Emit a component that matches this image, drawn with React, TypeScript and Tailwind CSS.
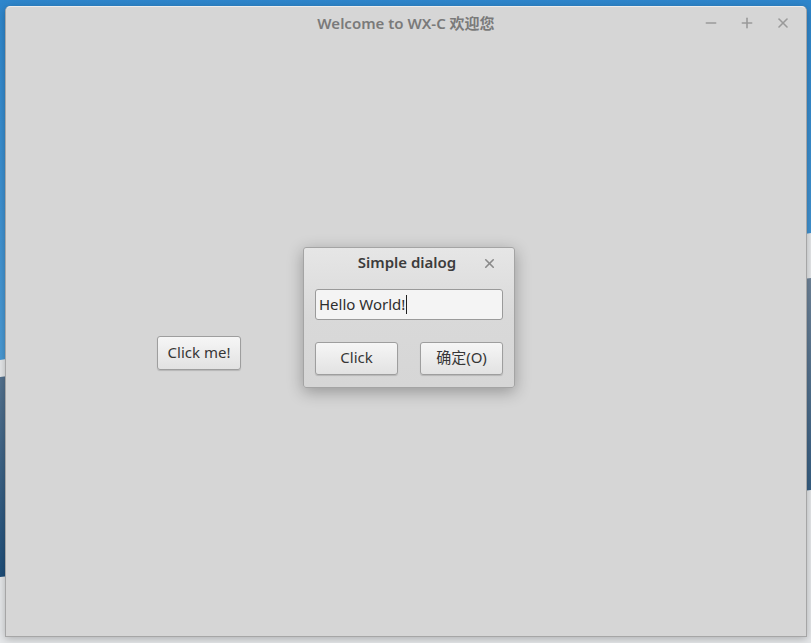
import { X, Minus, Plus } from "lucide-react";

const font = "font-['Noto_Sans','Noto_Sans_CJK_SC',sans-serif]";

function Wallpaper() {
  return (
    <svg className="absolute inset-0" width="811" height="643" viewBox="0 0 811 643">
      <defs>
        <linearGradient id="sky" x1="0" y1="0" x2="0" y2="1">
          <stop offset="0" stopColor="#2e86cc" />
          <stop offset="1" stopColor="#4b9ad4" />
        </linearGradient>
        <linearGradient id="sea" x1="0" y1="0" x2="0" y2="1">
          <stop offset="0" stopColor="#6f8499" />
          <stop offset="1" stopColor="#1f4f7a" />
        </linearGradient>
      </defs>
      <rect width="811" height="643" fill="#e6e8ea" />
      <polygon points="0,0 811,0 811,233 0,360" fill="url(#sky)" />
      <polygon points="0,377 811,278 811,490 0,577" fill="url(#sea)" />
    </svg>
  );
}

function Button({ label, className }: { label: string; className: string }) {
  return (
    <button
      type="button"
      className={`flex items-center justify-center rounded-[3px] border border-[#9e9e9e] bg-gradient-to-b from-[#f6f6f6] to-[#e2e2e2] pb-[2px] text-[15px] text-[#363636] shadow-[0_1px_1px_rgba(0,0,0,0.15)] ${className}`}
    >
      {label}
    </button>
  );
}

export default function App() {
  return (
    <div className={`relative h-[643px] w-[811px] overflow-hidden ${font}`}>
      <Wallpaper />

      {/* main frame */}
      <div className="absolute left-[5px] top-[6px] flex h-[631px] w-[802px] flex-col rounded-t-[5px] border border-t-0 border-[#a6a6a6] bg-[#d6d6d6] shadow-[0_2px_8px_rgba(0,0,0,0.25)]">
        <div className="relative flex h-[33px] items-center justify-center rounded-t-[5px] border-t border-[#ececec]">
          <span className="text-[15px] font-semibold text-[#7a7a7a]">Welcome to WX-C 欢迎您</span>
          <div className="absolute right-[15px] top-[8px] flex items-center gap-[20px] text-[#9a9a9a]">
            <Minus size={16} strokeWidth={2.4} />
            <Plus size={16} strokeWidth={2.4} />
            <X size={16} strokeWidth={2.4} />
          </div>
        </div>
        <div className="pl-[151px] pt-[297px]">
          <Button label="Click me!" className="h-[34px] w-[84px]" />
        </div>
      </div>

      {/* dialog */}
      <div className="absolute left-[303px] top-[247px] flex h-[141px] w-[212px] flex-col rounded-[3px] border border-[#a4a4a4] bg-gradient-to-b from-[#e6e6e6] via-[#d9d9d9] to-[#d6d6d6] shadow-[0_4px_16px_rgba(0,0,0,0.3)]">
        <div className="relative flex h-[29px] items-center justify-center pr-[4px]">
          <span className="text-[15px] font-semibold text-[#3c3c3c]">Simple dialog</span>
          <X size={15} strokeWidth={2.6} className="absolute right-[17px] top-[8px] text-[#8a8a8a]" />
        </div>
        <div className="px-[11px] pt-[12px]">
          <div className="flex h-[31px] items-center rounded-[3px] border border-[#9a9a9a] bg-[#f4f4f4] px-[3px] text-[15px] text-[#2e2e2e]">
            Hello World!
            <span className="ml-px inline-block h-[19px] w-px bg-[#202020]" />
          </div>
        </div>
        <div className="flex justify-between px-[11px] pt-[22px]">
          <Button label="Click" className="h-[33px] w-[83px]" />
          <Button label="确定(O)" className="h-[33px] w-[83px]" />
        </div>
      </div>
    </div>
  );
}
